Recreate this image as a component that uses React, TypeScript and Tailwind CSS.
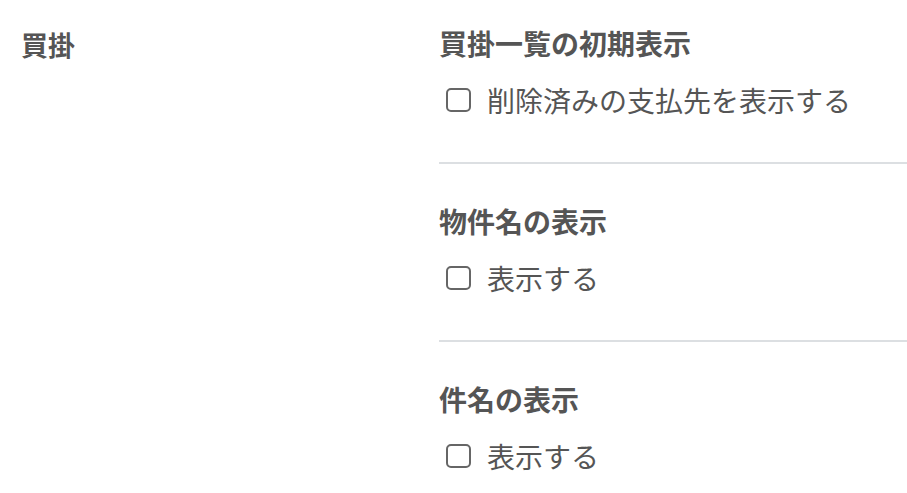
import { useState } from 'react';

interface OptionSectionProps {
  title: string;
  label: string;
  first?: boolean;
  last?: boolean;
}

function OptionSection({ title, label, first, last }: OptionSectionProps) {
  const [checked, setChecked] = useState(false);

  return (
    <div className={`${first ? 'pt-[29px]' : 'pt-[43px]'} ${last ? '' : 'border-b-2 border-[#dcdfe2] pb-[46px]'}`}>
      <h3 className="text-[28px] leading-[28px] font-bold text-[#555]">{title}</h3>
      <label className="mt-[27px] flex h-[32px] items-center cursor-pointer">
        <span
          onClick={() => setChecked(!checked)}
          className="ml-[7px] flex h-[24px] w-[25px] items-center justify-center rounded-[5px] border-2 border-[#666] bg-white"
        >
          {checked && <span className="h-3 w-3 rounded-sm bg-[#555]" />}
        </span>
        <span className="ml-[16px] text-[28px] leading-[32px] text-[#555]">{label}</span>
      </label>
    </div>
  );
}

export default function App() {
  return (
    <div className="flex min-h-[493px] w-[907px] bg-white font-['Noto_Sans_CJK_JP','Noto_Sans',sans-serif]">
      <div className="w-[439px] shrink-0 pl-[21px] pt-[31px]">
        <h2 className="text-[27px] leading-[28px] font-bold text-[#555]">買掛</h2>
      </div>
      <div className="flex-1">
        <OptionSection first title="買掛一覧の初期表示" label="削除済みの支払先を表示する" />
        <OptionSection title="物件名の表示" label="表示する" />
        <OptionSection last title="件名の表示" label="表示する" />
      </div>
    </div>
  );
}
